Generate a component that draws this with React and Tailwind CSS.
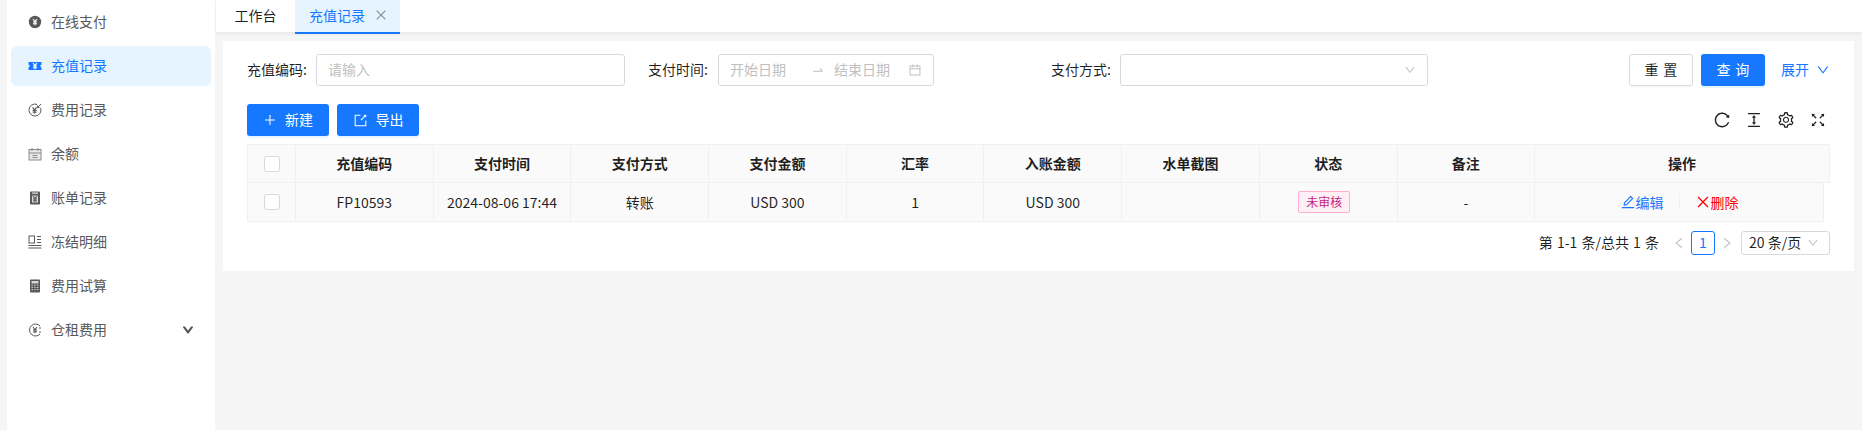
import {
  AiOutlineReload,
  AiOutlineColumnHeight,
  AiOutlineSetting,
  AiOutlineFullscreen,
  AiOutlinePlus,
  AiOutlineExport,
  AiOutlineEdit,
  AiOutlineClose,
  AiOutlineCalendar,
  AiOutlineSwapRight,
  AiOutlineDown,
  AiOutlineLeft,
  AiOutlineRight,
} from 'react-icons/ai';

const FONT = { fontFamily: '"Noto Sans CJK SC", "Noto Sans", sans-serif' };

// small menu glyphs, all on a 14 box
const YenMark = ({ stroke = '#fff', cx = 7, cy = 7 }) => (
  <path
    d={`M${cx - 2} ${cy - 3}L${cx} ${cy - 0.5}L${cx + 2} ${cy - 3}M${cx} ${cy - 0.5}V${cy + 3.2}M${cx - 2} ${cy}H${cx + 2}M${cx - 2} ${cy + 1.7}H${cx + 2}`}
    stroke={stroke}
    strokeWidth="1.1"
    fill="none"
  />
);

const PayIcon = () => (
  <svg width="14" height="14" viewBox="0 0 14 14">
    <circle cx="7" cy="7" r="6.2" fill="#595959" />
    <YenMark />
  </svg>
);

const TicketIcon = () => (
  <svg width="14" height="14" viewBox="0 0 14 14">
    <path d="M0.5 3H13.5V5.8A1.2 1.2 0 0 0 13.5 8.2V11H0.5V8.2A1.2 1.2 0 0 0 0.5 5.8Z" fill="#1677ff" />
    <YenMark />
  </svg>
);

const CostIcon = () => (
  <svg width="14" height="14" viewBox="0 0 14 14" fill="none">
    <path d="M9 1.4A6 6 0 1 0 12.6 5" stroke="#595959" strokeWidth="1" />
    <YenMark stroke="#595959" cx={6.6} cy={7.4} />
    <path d="M13 1L9.4 4.6M9.4 2.4V4.6H11.6" stroke="#595959" strokeWidth="1" />
  </svg>
);

const BalanceIcon = () => (
  <svg width="14" height="14" viewBox="0 0 14 14" fill="none">
    <rect x="1" y="2.5" width="12" height="10.5" fill="#e8e8e8" stroke="#8c8c8c" />
    <path d="M4 1V4M10 1V4M1 6H13M4.5 8.5H9.5M4.5 10.5H9.5" stroke="#8c8c8c" />
  </svg>
);

const BillIcon = () => (
  <svg width="14" height="14" viewBox="0 0 14 14">
    <rect x="2" y="0.5" width="10" height="13" rx="1" fill="#595959" />
    <rect x="4" y="1.6" width="6" height="1" fill="#fff" />
    <rect x="4" y="4.5" width="6" height="7" fill="#d9d9d9" />
    <YenMark stroke="#595959" cy={8} />
  </svg>
);

const FreezeIcon = () => (
  <svg width="14" height="14" viewBox="0 0 14 14" fill="none" stroke="#595959">
    <rect x="1" y="1" width="5.5" height="7" />
    <path d="M9 1.5H13M9 4.5H13M9 7.5H13" strokeWidth="1.2" />
    <path d="M0.5 10.5H13.5M0.5 13H13.5" strokeWidth="1.2" />
  </svg>
);

const CalcIcon = () => (
  <svg width="14" height="14" viewBox="0 0 14 14">
    <rect x="2" y="0.5" width="10" height="13" rx="0.8" fill="#595959" />
    <rect x="3.5" y="2" width="7" height="2.5" fill="#d9d9d9" />
    <path d="M3.5 6.2H10.5M3.5 8.4H10.5M3.5 10.6H10.5" stroke="#d9d9d9" strokeWidth="1" strokeDasharray="1.5 1.2" />
  </svg>
);

const RentIcon = () => (
  <svg width="14" height="14" viewBox="0 0 14 14" fill="none">
    <path d="M12 3A6 6 0 1 0 12 11" stroke="#595959" strokeWidth="1" />
    <YenMark stroke="#595959" />
    <path d="M11 5H13M11 9H13" stroke="#595959" />
  </svg>
);

const MENU = [
  { label: '在线支付', icon: PayIcon },
  { label: '充值记录', icon: TicketIcon, active: true },
  { label: '费用记录', icon: CostIcon },
  { label: '余额', icon: BalanceIcon },
  { label: '账单记录', icon: BillIcon },
  { label: '冻结明细', icon: FreezeIcon },
  { label: '费用试算', icon: CalcIcon },
  { label: '仓租费用', icon: RentIcon, arrow: true },
];

const COLUMNS = ['充值编码', '支付时间', '支付方式', '支付金额', '汇率', '入账金额', '水单截图', '状态', '备注', '操作'];

function Sidebar() {
  return (
    <aside className="ml-[7px] w-[208px] shrink-0 bg-white px-1 pt-0.5">
      {MENU.map(({ label, icon: Icon, active, arrow }) => (
        <div
          key={label}
          className={`mb-1 flex h-10 items-center rounded-md pl-[17px] pr-[17px] text-sm ${active ? 'bg-[#e6f4ff] text-[#1677ff]' : 'text-[#595959]'}`}
        >
          <Icon />
          <span className="ml-[9px] flex-1 pb-0.5">{label}</span>
          {arrow && <AiOutlineDown className="text-xs text-[#595959] [&_path]:stroke-[#595959] [&_path]:stroke-[100]" />}
        </div>
      ))}
    </aside>
  );
}

function Tabs() {
  return (
    <div className="flex h-8 items-stretch bg-white text-sm shadow-[0_2px_4px_rgba(0,0,0,0.06)]">
      <div className="flex w-[79px] items-center justify-center pb-0.5 text-[rgba(0,0,0,0.88)]">工作台</div>
      <div className="-mb-0.5 flex w-[105px] items-center border-b-2 border-[#1677ff] bg-[#e6f4ff] pb-0.5 pl-[14px] text-[#1677ff]">
        充值记录
        <AiOutlineClose className="ml-[9px] text-sm text-[#8c8c8c]" />
      </div>
    </div>
  );
}

function Field({ label, width, children, className }) {
  return (
    <div className={`flex items-center ${className}`}>
      <span className={`whitespace-nowrap pb-0.5 text-sm text-[rgba(0,0,0,0.88)] ${width}`}>{label}:</span>
      {children}
    </div>
  );
}

function SearchBar() {
  return (
    <div className="flex items-center">
      <Field label="充值编码" width="w-[69px]">
        <div className="flex h-8 w-[309px] items-center rounded-[3px] border border-[#d9d9d9] px-[11px] pb-0.5 text-sm text-[#bfbfbf]">请输入</div>
      </Field>
      <Field label="支付时间" width="w-[70px]" className="ml-[23px]">
        <div className="flex h-8 w-[216px] items-center rounded-[3px] border border-[#d9d9d9] pl-[11px] pr-[11px] text-sm text-[#bfbfbf]">
          <span className="whitespace-nowrap pb-0.5">开始日期</span>
          <AiOutlineSwapRight className="ml-[25px] text-sm" />
          <span className="ml-[9px] whitespace-nowrap pb-0.5">结束日期</span>
          <AiOutlineCalendar className="ml-auto text-sm" />
        </div>
      </Field>
      <Field label="支付方式" width="w-[69px]" className="ml-[117px]">
        <div className="flex h-8 w-[308px] items-center justify-end rounded-[3px] border border-[#d9d9d9] pr-[11px] text-[#bfbfbf]">
          <AiOutlineDown className="text-xs" />
        </div>
      </Field>
      <div className="ml-auto flex items-center">
        <button className="h-8 w-16 rounded-[3px] border border-[#d9d9d9] bg-white pb-0.5 pl-[0.34em] text-sm tracking-[0.34em] text-[rgba(0,0,0,0.88)] shadow-[0_2px_0_rgba(0,0,0,0.02)]">重置</button>
        <button className="ml-2 h-8 w-16 rounded-[3px] bg-[#1677ff] pb-0.5 pl-[0.34em] text-sm tracking-[0.34em] text-white shadow-[0_2px_0_rgba(5,145,255,0.1)]">查询</button>
        <span className="ml-4 flex items-center text-sm text-[#1677ff]">
          <span className="pb-0.5">展开</span>
          <AiOutlineDown className="ml-[7px] text-sm" />
        </span>
      </div>
    </div>
  );
}

function Toolbar() {
  return (
    <div className="mt-[18px] flex h-8 items-center justify-between">
      <div className="flex gap-2">
        <button className="flex h-8 w-[82px] items-center justify-center rounded-[3px] bg-[#1677ff] text-sm text-white shadow-[0_2px_0_rgba(5,145,255,0.1)]">
          <AiOutlinePlus className="mr-2 text-sm" />
          <span className="pb-0.5">新建</span>
        </button>
        <button className="flex h-8 w-[82px] items-center justify-center rounded-[3px] bg-[#1677ff] text-sm text-white shadow-[0_2px_0_rgba(5,145,255,0.1)]">
          <AiOutlineExport className="mr-2 text-[15px]" />
          <span className="pb-0.5">导出</span>
        </button>
      </div>
      <div className="mr-[3px] flex items-center gap-3.5 text-lg text-[rgba(0,0,0,0.88)]">
        <AiOutlineReload />
        <AiOutlineColumnHeight />
        <AiOutlineSetting />
        <AiOutlineFullscreen />
      </div>
    </div>
  );
}

function Checkbox() {
  return <span className="block h-4 w-4 rounded-[3px] border border-[#d9d9d9] bg-white" />;
}

function Table() {
  const gridCols = 'grid grid-cols-[49px_repeat(9,137.7px)_1fr]';
  const cell = 'flex items-center justify-center border-r border-[#f0f0f0]';
  return (
    <div className="mt-2 text-sm text-[rgba(0,0,0,0.88)]">
      <div className={`${gridCols} h-[39px] border-y border-[#f0f0f0] bg-[#fafafa] font-semibold`}>
        <div className={`${cell} border-l`}><Checkbox /></div>
        {COLUMNS.map((name) => (
          <div key={name} className={`${cell} pb-0.5`}>{name}</div>
        ))}
      </div>
      <div className={`${gridCols} mr-1.5 h-[39px] border-b border-[#f0f0f0] bg-[#fafafa]`}>
        <div className={`${cell} border-l`}><Checkbox /></div>
        <div className={cell}>FP10593</div>
        <div className={cell}>2024-08-06 17:44</div>
        <div className={cell}>转账</div>
        <div className={cell}>USD 300</div>
        <div className={cell}>1</div>
        <div className={cell}>USD 300</div>
        <div className={cell} />
        <div className={cell}>
          <span className="mr-2 flex h-[22px] w-[52px] items-center justify-center rounded-[2px] border border-[#ffadd2] bg-[#fff0f6] text-xs text-[#c41d7f]">未审核</span>
        </div>
        <div className={cell}>-</div>
        <div className={cell}>
          <span className="flex items-center text-[#1677ff]">
            <AiOutlineEdit className="text-base" />编辑
          </span>
          <span className="mx-[15px] h-4 w-px bg-[#f0f0f0]" />
          <span className="flex items-center text-[#ff0000]">
            <AiOutlineClose className="text-base" />删除
          </span>
        </div>
      </div>
    </div>
  );
}

function Pagination() {
  return (
    <div className="mt-[9px] flex h-6 items-center justify-end text-sm text-[rgba(0,0,0,0.88)]">
      <span className="whitespace-nowrap pb-0.5 [word-spacing:1px]">第 1-1 条/总共 1 条</span>
      <AiOutlineLeft className="ml-[13px] text-sm text-[#bfbfbf]" />
      <span className="ml-[5px] flex h-6 w-6 items-center justify-center rounded-[3px] border border-[#1677ff] pb-0.5 text-[#1677ff]">1</span>
      <AiOutlineRight className="ml-[5px] text-sm text-[#bfbfbf]" />
      <span className="ml-[7px] flex h-6 w-[89px] items-center whitespace-nowrap rounded-[3px] border border-[#d9d9d9] pl-[7px]">
        <span className="pb-0.5">20 条/页</span>
        <AiOutlineDown className="ml-[6px] text-xs text-[#bfbfbf]" />
      </span>
    </div>
  );
}

export default function App() {
  return (
    <div className="flex h-screen w-full overflow-hidden bg-[#f5f5f5]" style={FONT}>
      <Sidebar />
      <main className="ml-px min-w-0 flex-1">
        <Tabs />
        <div className="ml-[7px] mr-2 mt-[9px] bg-white px-6 pb-4 pt-[13px]">
          <SearchBar />
          <Toolbar />
          <Table />
          <Pagination />
        </div>
      </main>
    </div>
  );
}
